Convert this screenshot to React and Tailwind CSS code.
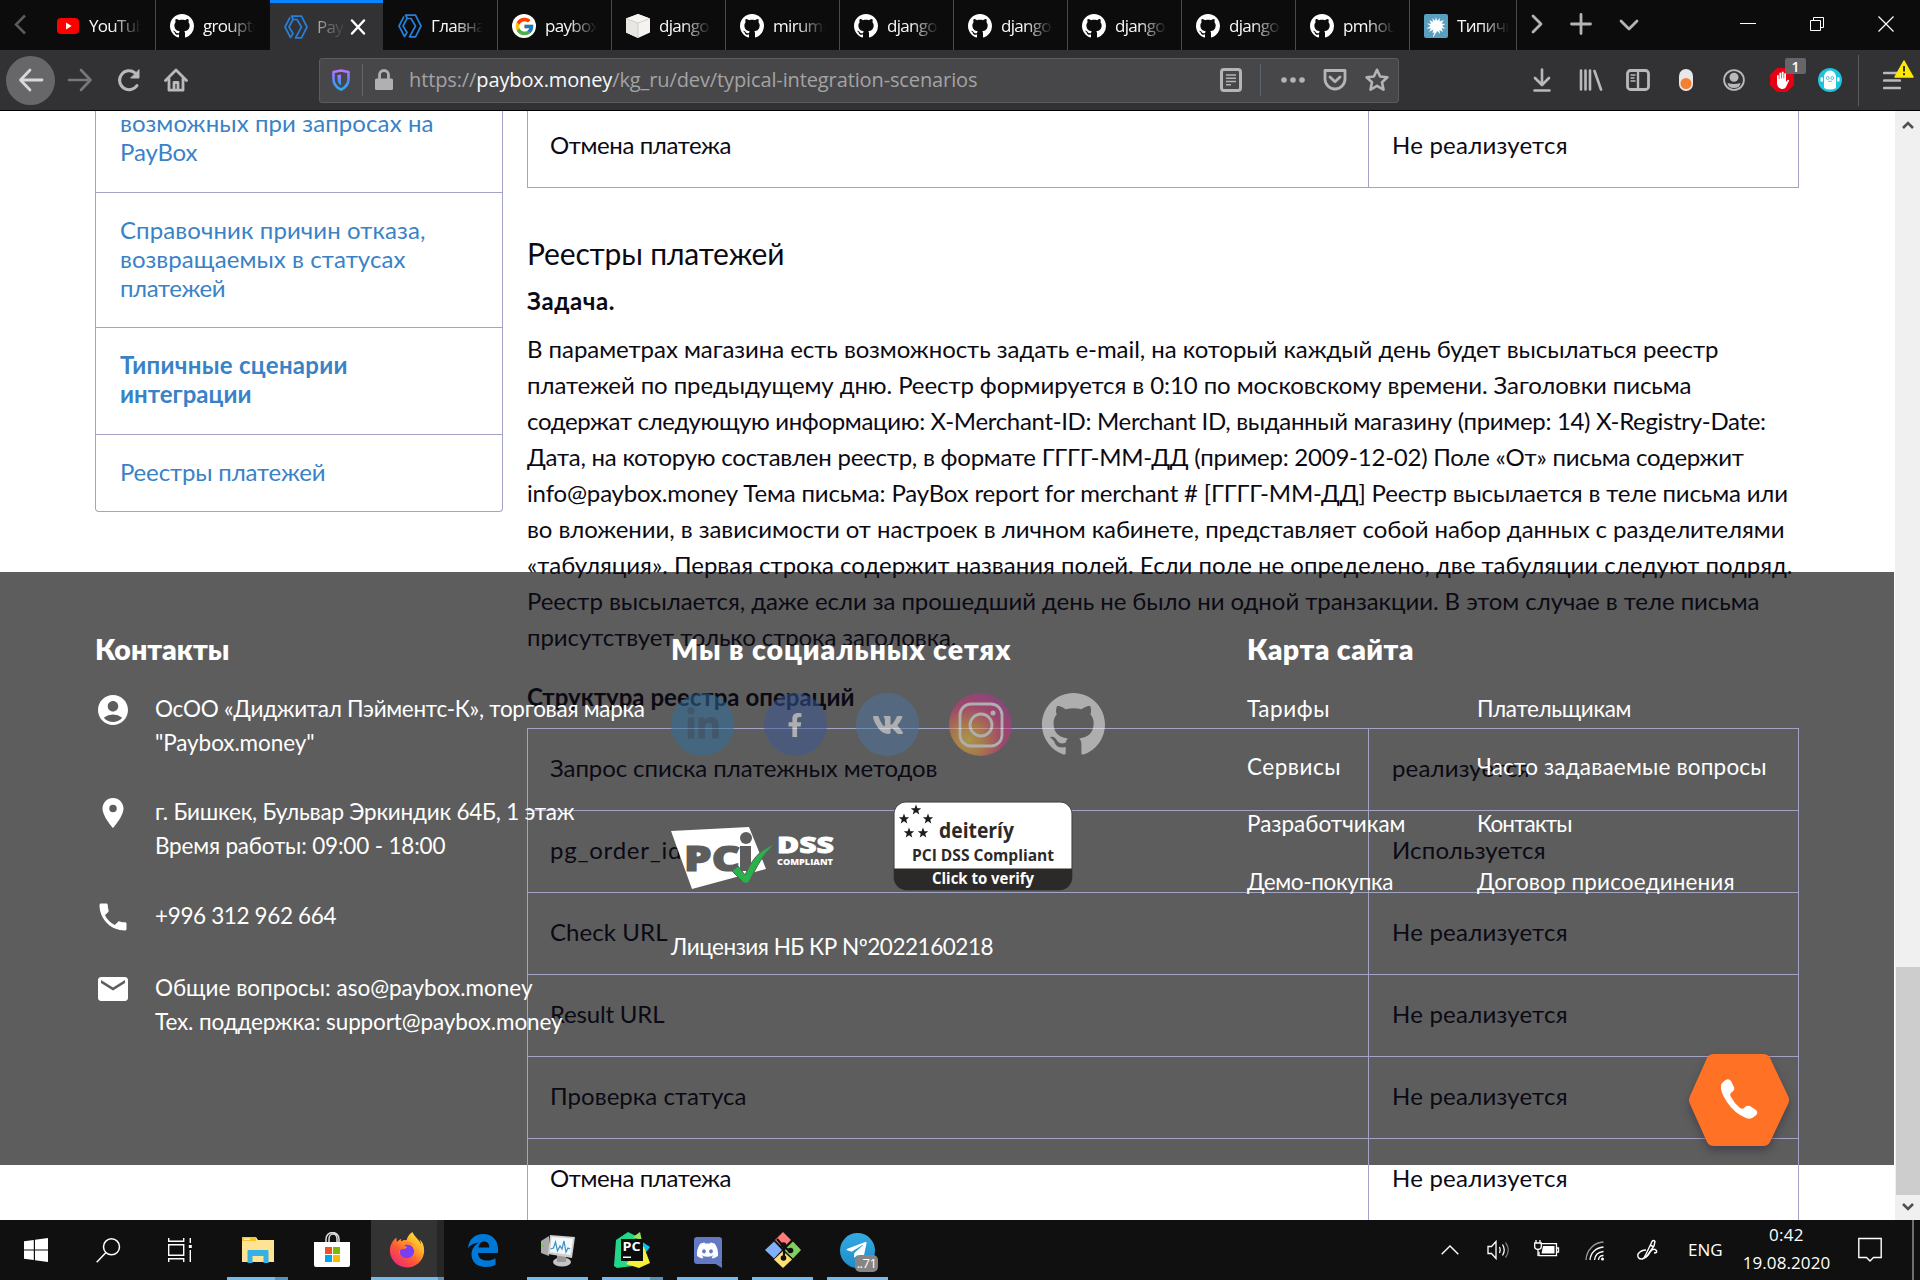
import React, { useLayoutEffect, useRef, useState } from "react";
import { FaFirefoxBrowser, FaDiscord, FaVk, FaLinkedinIn, FaFacebookF, FaTelegramPlane } from "react-icons/fa";
import { FcGoogle } from "react-icons/fc";
import { MdAccountCircle, MdPlace, MdPhone, MdEmail } from "react-icons/md";

/* A single line of text tracked out (or in) so that it fills a given width. */
function Fit({ w, className = "", children }) {
  const ref = useRef(null);
  const [sp, setSp] = useState(0);
  useLayoutEffect(() => {
    const natural = ref.current.getBoundingClientRect().width;
    setSp((w + 0.5 - natural) / (ref.current.textContent.length - 1));
  }, [w]);
  return (
    <span ref={ref} className={`inline-block whitespace-pre ${className}`} style={{ letterSpacing: `${sp}px` }}>
      {children}
    </span>
  );
}

const GithubMark = ({ className }) => (
  <svg viewBox="0 0 16 16" className={className} fill="currentColor">
    <path d="M8 0C3.58 0 0 3.58 0 8c0 3.54 2.29 6.53 5.47 7.59.4.07.55-.17.55-.38 0-.19-.01-.82-.01-1.49-2.01.37-2.53-.49-2.69-.94-.09-.23-.48-.94-.82-1.13-.28-.15-.68-.52-.01-.53.63-.01 1.08.58 1.23.82.72 1.21 1.87.87 2.33.66.07-.52.28-.87.51-1.07-1.78-.2-3.64-.89-3.64-3.95 0-.87.31-1.59.82-2.15-.08-.2-.36-1.02.08-2.12 0 0 .67-.21 2.2.82.64-.18 1.32-.27 2-.27.68 0 1.36.09 2 .27 1.53-1.04 2.2-.82 2.2-.82.44 1.1.16 1.92.08 2.12.51.56.82 1.27.82 2.15 0 3.07-1.87 3.75-3.65 3.95.29.25.54.73.54 1.48 0 1.07-.01 1.93-.01 2.2 0 .21.15.46.55.38A8.013 8.013 0 0016 8c0-4.42-3.58-8-8-8z" />
  </svg>
);
const YoutubeMark = () => (
  <svg viewBox="0 0 24 24" className="size-6">
    <rect x="1" y="4" width="22" height="16" rx="4" fill="#f00" />
    <path d="M10 8.600v6.800l5.600-3.400z" fill="#fff" />
  </svg>
);
const PayboxMark = () => (
  <svg viewBox="0 0 24 24" className="size-6" fill="none" stroke="#2680d9" strokeWidth="1.700" strokeLinejoin="round">
    <path d="M6 2.500 1 12l5.500 10.500L9 18.500 5 12l4-7.500" />
    <path d="M7.500 1.200h10L23 12l-5.500 10.800h-6L17.500 12 13 4.500H9.500z" />
  </svg>
);
const BoxMark = () => (
  <svg viewBox="0 0 24 24" className="size-6">
    <path d="M12 0 24 4.500v14L12 24 0 18.500v-14z" fill="#f4f3f0" />
    <path d="M12 0 24 4.500 12 9 0 4.500z" fill="#f7f6f4" />
    <path d="M12 9v15L0 18.500v-14z" fill="#e9e7e3" />
    <path d="M0 4.500 12 9l12-4.500M12 9v15" stroke="#c9c6c0" strokeWidth=".8" fill="none" />
  </svg>
);
const SplatMark = () => (
  <svg viewBox="0 0 24 24" className="size-6">
    <rect width="24" height="24" rx="2" fill="#5b9fc0" />
    <path d="M12 3l1 4 3-3-.5 3.500L20 6l-2.500 3.500 4 .5-3.500 2 3.500 2.500-4-.2L19 18l-3.500-2 .5 4-2.500-3-2 2.500-2 3.500-.5-1 1.500-3.500-2 .5.800-3.500L5 18l2-3.500-4.500 0 4-2.500L3 9.500l4 .3L5.500 6 9 8l-.5-4L11 7z" fill="#fff" />
    <circle cx="12.500" cy="11.500" r="5" fill="#fff" />
  </svg>
);

const TABS = [
  ["yt", "YouTube", 114], ["gh", "groupte", 114], ["pb", "PayBox", 114], ["pb", "Главная", 114], ["gg", "paybox.m", 114],
  ["bx", "django-p", 114], ["gh", "mirumee", 114], ["gh", "django-o", 114], ["gh", "django-o", 114], ["gh", "django-o", 114],
  ["gh", "django-o", 114], ["gh", "pmhouse", 114], ["sp", "Типичны", 107],
];
const tabIcon = {
  yt: <YoutubeMark />, gh: <GithubMark className="size-6 text-white" />, pb: <PayboxMark />,
  gg: <span className="flex size-6 items-center justify-center rounded-full bg-white"><FcGoogle className="size-[21px]" /></span>,
  bx: <BoxMark />, sp: <SplatMark />,
};

function TabBar() {
  return (
    <div className="flex h-[50px] bg-[#0c0c0d] font-['Open_Sans',sans-serif] text-[#f9f9fa]">
      <div className="flex w-[42px] items-center pl-[13px]">
        <svg viewBox="0 0 14 22" className="h-[22px] w-[14px]" fill="none" stroke="#5a5a5c" strokeWidth="2.500"><path d="M12 1.500 3 10.500l9 9" /></svg>
      </div>
      {TABS.map(([ic, t, w], i) => (
        <div key={i} className={`flex h-[50px] items-center pt-[2px] pl-[14px] ${w === 107 ? "w-[107px]" : i === 2 ? "mr-px w-[113px]" : "w-[114px]"} ${i === 2 ? "border-t-[3px] border-[#0a84ff] bg-[#323234] pt-0 pb-[1px]" : i === 1 ? "" : "border-r border-[#4a4a4c]"}`}>
          <span className="shrink-0">{tabIcon[ic]}</span>
          <span className={`ml-[9px] overflow-hidden text-[17px] leading-6 tracking-[-0.7px] whitespace-nowrap ${i === 2 ? "w-[26px] bg-gradient-to-r from-[#b0b0b2] to-[#404042] bg-clip-text text-transparent" : "w-[52px] [mask-image:linear-gradient(to_right,#000_45%,transparent)]"}`}>{t}</span>
          {i === 2 && <svg viewBox="0 0 16 16" className="ml-[7px] size-4 shrink-0" stroke="#fff" strokeWidth="2.400" strokeLinecap="round"><path d="M2 1.500 14 14.500M14 1.500 2 14.500" /></svg>}
        </div>
      ))}
      <svg viewBox="0 0 12 24" className="mt-[12px] ml-[14px] h-6 w-3" fill="none" stroke="#b4b4b6" strokeWidth="2.800" strokeLinecap="round" strokeLinejoin="round"><path d="M2 4l8 8-8 8" /></svg>
      <svg viewBox="0 0 22 22" className="mt-[13px] ml-[27px] size-[22px]" stroke="#b4b4b6" strokeWidth="2.800" strokeLinecap="round"><path d="M11 1.500v19M1.500 11h19" /></svg>
      <svg viewBox="0 0 20 12" className="mt-[19px] ml-[27px] h-3 w-5" fill="none" stroke="#b4b4b6" strokeWidth="2.800" strokeLinecap="round" strokeLinejoin="round"><path d="M2 2l8 8 8-8" /></svg>
      <span className="mt-[23px] ml-[101px] h-px w-4 bg-white" />
      <svg viewBox="0 0 16 16" className="mt-[16px] ml-[53px] size-4" fill="none" stroke="#fff"><path d="M1.500 4.500h10v10h-10zM4.500 4.500v-3h10v10h-3" /></svg>
      <svg viewBox="0 0 16 16" className="mt-[16px] ml-[53px] size-4" stroke="#fff" strokeWidth="1.200"><path d="M.5.500l15 15M15.500.500l-15 15" /></svg>
    </div>
  );
}

const G = "#b9b9bb";
function Toolbar() {
  return (
    <div className="flex h-[61px] items-center border-b border-black bg-[#323234]">
      <div className="ml-[6px] flex size-[49px] items-center justify-center rounded-full bg-[#676769]">
        <svg viewBox="0 0 26 24" className="h-6 w-[26px]" fill="none" stroke="#d8d8d9" strokeWidth="2.800" strokeLinecap="round" strokeLinejoin="round"><path d="M12 2 2.500 12 12 22M3 12h21" /></svg>
      </div>
      <svg viewBox="0 0 26 24" className="ml-[12px] h-6 w-[26px]" fill="none" stroke="#77777a" strokeWidth="2.600" strokeLinecap="round" strokeLinejoin="round"><path d="M14 2l9.500 10L14 22M23 12H2" /></svg>
      <svg viewBox="0 0 24 24" className="ml-[24px] size-6" fill="none" stroke={G} strokeWidth="3" strokeLinecap="round"><path d="M20 17.500A9.500 9.500 0 1 1 18 4.800" /><path d="M22 2v8h-8z" fill={G} stroke={G} strokeWidth="1" strokeLinejoin="round" /></svg>
      <svg viewBox="0 0 24 24" className="ml-[23px] size-6" fill="none" stroke={G} strokeWidth="2.800" strokeLinecap="round" strokeLinejoin="round"><path d="M1.500 12.500 12 2l10.500 10.500M5 11v11.200h14V11" /><path d="M10 21v-6.500h4V21" /></svg>

      <div className="ml-[131px] flex h-[45px] w-[1080px] items-center rounded-[3px] border border-[#5b5b5d] bg-[#474749]">
        <svg viewBox="0 0 18 22" className="ml-[12px] h-[22px] w-[18px]" fill="none">
          <defs><linearGradient id="sh" x2="0" y2="1"><stop stopColor="#b675ff" /><stop offset=".5" stopColor="#5f86ff" /><stop offset="1" stopColor="#2aaaf0" /></linearGradient></defs>
          <path d="M9 1.500 16.500 3v7c0 5-3 8.500-7.500 10.500C4.500 18.500 1.500 15 1.500 10V3z" stroke="url(#sh)" strokeWidth="2.600" strokeLinejoin="round" />
          <path d="M9 5.500v11C6.500 14.800 5.400 12.500 5.400 9.500V6.200z" fill="url(#sh)" />
        </svg>
        <span className="ml-[12px] h-[32px] w-px bg-[#66666a]" />
        <svg viewBox="0 0 18 22" className="ml-[12px] h-[22px] w-[18px]"><rect y="9.500" width="18" height="11.500" rx="1.500" fill="#b0b0b2" /><path d="M4.500 10V6a4.500 4.500 0 0 1 9 0v4" fill="none" stroke="#b0b0b2" strokeWidth="2.800" /></svg>
        <span className="ml-[16px] w-[570px] font-['Open_Sans',sans-serif] text-[20px] text-[#a3a3a5]">
          <Fit w={568}>https://<span className="text-[#f9f9fa]">paybox.money</span>/kg_ru/dev/typical-integration-scenarios</Fit>
        </span>
        <svg viewBox="0 0 22 24" className="ml-[241px] h-6 w-[22px]" fill="none" stroke="#b4b4b6"><rect x="1.500" y="1.500" width="19" height="21" rx="2.500" strokeWidth="3" /><path d="M6 7h10M6 10.300h10M6 13.600h10M6 16.800h5" strokeWidth="1.500" /></svg>
        <span className="ml-[18px] h-[32px] w-px bg-[#5f6672]" />
        <svg viewBox="0 0 24 6" className="ml-[20px] h-[6px] w-6" fill="#b4b4b6"><circle cx="3" cy="3" r="2.800" /><circle cx="12" cy="3" r="2.800" /><circle cx="21" cy="3" r="2.800" /></svg>
        <svg viewBox="0 0 24 22" className="ml-[18px] h-[22px] w-6" fill="none" stroke="#b4b4b6" strokeWidth="2.800" strokeLinecap="round" strokeLinejoin="round"><path d="M2 1.500h20v8.500a10 10 0 0 1-20 0z" /><path d="M7 8l5 4.800L17 8" /></svg>
        <svg viewBox="0 0 24 24" className="ml-[18px] size-6" fill="none" stroke="#b4b4b6" strokeWidth="2.600" strokeLinejoin="round"><path d="M12 1.800l3.100 6.700 7.300.8-5.400 5 1.500 7.300L12 17.900l-6.500 3.700L7 14.300l-5.400-5 7.300-.8z" /></svg>
      </div>

      <svg viewBox="0 0 18 24" className="ml-[134px] h-6 w-[18px]" fill="none" stroke={G} strokeWidth="2.600" strokeLinecap="round" strokeLinejoin="round"><path d="M9 1.500v15M2 10l7 7 7-7M1.500 22.500h15" /></svg>
      <svg viewBox="0 0 24 22" className="ml-[28px] h-[22px] w-6" fill="none" stroke={G} strokeWidth="2.600" strokeLinecap="round"><path d="M2 1.500v19M6.500 1.500v19M11 1.500v19M15.500 2l6.500 18.500" /></svg>
      <svg viewBox="0 0 24 22" className="ml-[23px] h-[22px] w-6" fill="none" stroke={G}><rect x="1.500" y="1.500" width="21" height="19" rx="3" strokeWidth="2.800" /><path d="M12 2v18" strokeWidth="2.400" /><path d="M4.500 6h5M4.500 9h4M4.500 12h5" strokeWidth="1.400" /></svg>
      <svg viewBox="0 0 14 22" className="ml-[29px] h-[22px] w-[14px]"><rect width="14" height="22" rx="7" fill="#e8e8ea" /><circle cx="7" cy="14.500" r="5.500" fill="#f58030" /></svg>
      <svg viewBox="0 0 22 22" className="ml-[30px] size-[22px]" fill="none" stroke={G}><circle cx="11" cy="11" r="9.900" strokeWidth="1.800" /><circle cx="11" cy="8.300" r="4.500" fill={G} stroke="none" /><path d="M4.500 14q6.500 2 13 0-.5 5-6.500 5t-6.500-5z" fill={G} stroke="none" /></svg>
      <div className="relative ml-[25px]">
        <svg viewBox="0 0 24 24" className="size-6"><path d="M7 0h10l7 7v10l-7 7H7l-7-7V7z" fill="#e60012" /><path d="M7 13V7.500q1-1 1.800 0V11h.6V5q1-1 1.800 0v5.500h.6V4q1-1 1.800 0v6.500h.6V5.500q1-1 1.800 0V14l1.500-2q1.500-.5 1.600.5L16 19q-1 2-3.500 2h-1Q7.500 20 7 16z" fill="#fff" /></svg>
        <span className="absolute -top-[10px] left-[15px] flex h-4 w-[21px] items-center justify-center rounded-[2px] bg-[#66666a] font-['Open_Sans',sans-serif] text-[14px] font-semibold text-white">1</span>
      </div>
      <svg viewBox="0 0 24 24" className="ml-[24px] size-6"><circle cx="12" cy="12" r="12" fill="#1cc5dc" /><path d="M6 20V9a6 6.500 0 0 1 12 0v11q-6 3-12 0z" fill="#fff" /><path d="M2.500 9.500h2.500v4H2.500zM19 9.500h2.500v4H19z" fill="#fff" /><circle cx="9.700" cy="10" r="1.500" fill="none" stroke="#2ab5c8" strokeWidth=".8" /><circle cx="14.300" cy="10" r="1.500" fill="none" stroke="#2ab5c8" strokeWidth=".8" /><path d="M10 13q2 1 4 0" stroke="#2ab5c8" strokeWidth=".8" fill="none" /></svg>
      <span className="ml-[16px] h-[51px] w-px bg-[#5a5a5c]" />
      <div className="relative ml-[24px]">
        <svg viewBox="0 0 18 18" className="h-[19px] w-[18px]" stroke={G} strokeWidth="2.700" strokeLinecap="round"><path d="M1.200 1.500h15.600M1.200 9h15.600M1.200 16.500h15.600" /></svg>
        <svg viewBox="0 0 20 18" className="absolute -top-[11px] left-[11px] h-[18px] w-5"><path d="M10 1l9 16H1z" fill="#ffe900" stroke="#ffe900" strokeWidth="1.500" strokeLinejoin="round" /><path d="M10 6v5.500M10 13v2.200" stroke="#3a3a20" strokeWidth="2" /></svg>
      </div>
    </div>
  );
}

function Sidebar() {
  const item = "flow-root border-b border-[#a3a3c5] px-6 leading-[28.8px]";
  return (
    <nav className="h-[401px] w-[408px] rounded-b-[4px] border-x border-b border-[#a3a3c5] text-[24px] text-[#3a82c6]">
      <div className={`${item} h-[82px]`}><div className="-mt-[2px]"><Fit w={313}>возможных при запросах на</Fit><br /><Fit w={77}>PayBox</Fit></div></div>
      <div className={`${item} h-[135px] pt-[23px]`}><Fit w={305}>Справочник причин отказа,</Fit><br /><Fit w={285}>возвращаемых в статусах</Fit><br /><Fit w={105}>платежей</Fit></div>
      <div className={`${item} h-[107px] pt-[23px] font-bold`}><Fit w={227}>Типичные сценарии</Fit><br /><Fit w={131}>интеграции</Fit></div>
      <div className="px-6 pt-[23px] leading-[28.8px]"><Fit w={205}>Реестры платежей</Fit></div>
    </nav>
  );
}

function Row({ a, aw, b, bw }) {
  return (
    <div className="flex h-[82px] border-b border-[#a3a3c5]">
      <div className="flex w-[841px] items-center border-r border-[#a3a3c5] pb-[3px] pl-[22px]"><Fit w={aw}>{a}</Fit></div>
      <div className="flex items-center pb-[3px] pl-[23px]"><Fit w={bw}>{b}</Fit></div>
    </div>
  );
}

const PARA = [
  ["В параметрах магазина есть возможность задать e-mail, на который каждый день будет высылаться реестр", 1191],
  ["платежей по предыдущему дню. Реестр формируется в 0:10 по московскому времени. Заголовки письма", 1164],
  ["содержат следующую информацию: X-Merchant-ID: Merchant ID, выданный магазину (пример: 14) X-Registry-Date:", 1238.5],
  ["Дата, на которую составлен реестр, в формате ГГГГ-ММ-ДД (пример: 2009-12-02) Поле «От» письма содержит", 1216.5],
  ["info@paybox.money Тема письма: PayBox report for merchant # [ГГГГ-ММ-ДД] Реестр высылается в теле письма или", 1260.5],
  ["во вложении, в зависимости от настроек в личном кабинете, представляет собой набор данных с разделителями", 1257],
  ["«табуляция». Первая строка содержит названия полей. Если поле не определено, две табуляции следуют подряд.", 1265],
  ["Реестр высылается, даже если за прошедший день не было ни одной транзакции. В этом случае в теле письма", 1232],
  ["присутствует только строка заголовка.", 429],
];

function Article() {
  return (
    <article className="ml-6 w-[1272px] text-[24px] leading-9 text-[#0b0a14]">
      <div className="flow-root h-[77px] border-x border-[#a3a3c5]">
        <div className="-mt-[5px]"><Row a="Отмена платежа" aw={181} b="Не реализуется" bw={175} /></div>
      </div>
      <h2 className="mt-[47px] text-[30px] leading-9"><Fit w={257}>Реестры платежей</Fit></h2>
      <p className="mt-3 font-bold"><Fit w={87}>Задача.</Fit></p>
      <p className="mt-3">{PARA.map(([t, w]) => <Fit key={t} w={w} className="block! w-max">{t}</Fit>)}</p>
      <p className="mt-6 font-bold"><Fit w={327}>Структура реестра операций</Fit></p>
      <div className="mt-[13px] border-x border-t border-[#a3a3c5]">
        <Row a="Запрос списка платежных методов" aw={387} b="реализуется" bw={137} />
        <Row a="pg_order_id" aw={131} b="Используется" bw={153} />
        <Row a="Check URL" aw={117} b="Не реализуется" bw={175} />
        <Row a="Result URL" aw={114} b="Не реализуется" bw={175} />
        <Row a="Проверка статуса" aw={196} b="Не реализуется" bw={175} />
        <Row a="Отмена платежа" aw={181} b="Не реализуется" bw={175} />
      </div>
    </article>
  );
}

function Contact({ icon, lines, className }) {
  return (
    <div className={`flex ${className}`}>
      <div className="w-[60px] shrink-0">{icon}</div>
      <div>{lines.map(([t, w]) => <Fit key={t} w={w} className="block! w-max leading-[34px]">{t}</Fit>)}</div>
    </div>
  );
}

const LINKS = [
  ["Тарифы", 82, "Плательщикам", 154], ["Сервисы", 93, "Часто задаваемые вопросы", 289],
  ["Разработчикам", 158, "Контакты", 95], ["Демо-покупка", 146, "Договор присоединения", 257],
];

const Star = ({ x, y }) => <path transform={`translate(${x} ${y})`} d="M0-5.500 1.400-1.700 5.200-1.700 2.200.7 3.300 4.500 0 2.200-3.300 4.500-2.200.7-5.200-1.700-1.400-1.700z" fill="#1d1d1b" />;

function Footer() {
  const circle = "flex size-[63px] items-center justify-center rounded-full text-white opacity-50";
  const heading = "-mt-px text-[28.500px] leading-9 font-extrabold";
  return (
    <footer className="absolute top-[461px] left-0 flex h-[593px] w-[1894px] pl-[95px] pt-[60px] text-[22.5px] text-white">
      <section className="w-[576px] shrink-0">
        <h3 className={heading}><Fit w={134}>Контакты</Fit></h3>
        <Contact className="mt-[25px]" icon={<MdAccountCircle className="size-9" />} lines={[["ОсОО «Диджитал Пэйментс-К», торговая марка", 489.5], ['"Paybox.money"', 159]]} />
        <Contact className="mt-[35px]" icon={<MdPlace className="size-9" />} lines={[["г. Бишкек, Бульвар Эркиндик 64Б, 1 этаж", 419], ["Время работы: 09:00 - 18:00", 290]]} />
        <Contact className="mt-[36px]" icon={<MdPhone className="size-9" />} lines={[["+996 312 962 664", 181]]} />
        <Contact className="mt-[36px]" icon={<MdEmail className="size-9" />} lines={[["Общие вопросы: aso@paybox.money", 377], ["Тех. поддержка: support@paybox.money", 407]]} />
      </section>
      <section className="w-[576px] shrink-0">
        <h3 className={heading}><Fit w={339}>Мы в социальных сетях</Fit></h3>
        <div className="mt-[26px] flex gap-[29.700px]">
          <span className={`${circle} bg-[#2d6f9f]`}><FaLinkedinIn className="size-9 text-[#2b5378]" /></span>
          <span className={`${circle} bg-[#3b5998]`}><FaFacebookF className="size-6" /></span>
          <span className={`${circle} bg-[#4d76a1]`}><FaVk className="size-8" /></span>
          <span className={`${circle} bg-[radial-gradient(circle_at_30%_75%,#f5d03a_0%,#f0923e_25%,#e22f7c_55%,#c8308c_70%,#7a3fb0_95%)]`}>
            <svg viewBox="0 0 46 46" className="size-[46px]" fill="none" stroke="#fff" strokeWidth="2.800"><rect x="2" y="2" width="42" height="42" rx="11" /><circle cx="23" cy="23" r="11" /><circle cx="35" cy="11" r="2.500" fill="#fff" stroke="none" /></svg>
          </span>
          <span className={circle}><GithubMark className="size-[63px]" /></span>
        </div>
        <div className="mt-[45px] flex">
          <svg viewBox="0 0 163 64" className="mt-[26px] h-16 w-[163px]">
            <path d="M0 4 78 0l17 42-74 20z" fill="#fff" />
            <g fontFamily="Open Sans, sans-serif" fontWeight="800">
              <text x="13" y="44" fontSize="35" textLength="56" lengthAdjust="spacingAndGlyphs" fill="#5d5d5d" stroke="#5d5d5d" strokeWidth="1.200">PC</text>
              <text x="106" y="26" fontSize="23" textLength="57" lengthAdjust="spacingAndGlyphs" fill="#fff" stroke="#fff" strokeWidth=".8">DSS</text>
              <text x="106" y="38" fontSize="9" textLength="56" lengthAdjust="spacingAndGlyphs" fill="#fff">COMPLIANT</text>
            </g>
            <circle cx="75" cy="11" r="6" fill="#5d5d5d" /><path d="M69 19h11v25H69z" fill="#5d5d5d" />
            <path d="M61 44l6-5 7 9c6-13 13-25 30-31-12 10-18 22-26 38q-4 3-7-1z" fill="#27b24a" stroke="#5d5d5d" strokeWidth="1" />
          </svg>
          <svg viewBox="0 0 180 90" className="ml-[59px] h-[90px] w-[180px]">
            <rect x=".7" y=".7" width="178.600" height="88.600" rx="13" fill="#2b2a29" />
            <path d="M1.500 67.500V13A11.500 11.500 0 0 1 13 1.500h153.500A11.500 11.500 0 0 1 178.500 13v54.500z" fill="#fff" />
            <Star x={23} y={9} /><Star x={11} y={18} /><Star x={35} y={18} /><Star x={16} y={32} /><Star x={30} y={32} />
            <g fontFamily="Open Sans, sans-serif" fontWeight="700">
              <text x="46" y="37" fontSize="21" textLength="75" lengthAdjust="spacingAndGlyphs" fill="#2b2a29">deiteríy</text>
              <text x="19" y="60" fontSize="16" textLength="142" lengthAdjust="spacingAndGlyphs" fill="#2b2a29">PCI DSS Compliant</text>
              <text x="39" y="83" fontSize="16" textLength="102" lengthAdjust="spacingAndGlyphs" fill="#fff">Click to verify</text>
            </g>
          </svg>
        </div>
        <p className="mt-[39px] leading-[34px]"><Fit w={322}>Лицензия НБ КР Nº2022160218</Fit></p>
      </section>
      <section>
        <h3 className={heading}><Fit w={166}>Карта сайта</Fit></h3>
        <div className="mt-[25px] grid grid-cols-[230px_300px] gap-y-[23.6px]">
          {LINKS.map(([a, aw, b, bw]) => (
            <React.Fragment key={a}><Fit w={aw} className="w-max leading-[34px]">{a}</Fit><Fit w={bw} className="w-max leading-[34px]">{b}</Fit></React.Fragment>
          ))}
        </div>
      </section>
    </footer>
  );
}

function Page() {
  return (
    <div className="flex h-[1109px] bg-white">
      <main className="relative h-[1109px] w-[1895px] overflow-hidden bg-[linear-gradient(#5d5d5d,#5d5d5d)] bg-[length:1894px_593px] bg-[position:0_461px] bg-no-repeat font-[Lato,sans-serif]">
        <div className="flex pl-[95px]"><Sidebar /><Article /></div>
        <Footer />
        <svg viewBox="0 0 116 116" className="absolute top-[935px] left-[1681px] size-[116px] drop-shadow-[0_5px_4px_rgba(40,35,60,0.45)]">
          <path d="M33 8h49q5 0 7 4l18 38q2 4 0 8L89 96q-2 4-7 4H33q-5 0-7-4L9 58q-2-4 0-8l17-38q2-4 7-4z" fill="#ff7226" />
          <path d="M42 36q5-5 8-1l3 6q1 3-2 5-3 2-1 5 3 6 9 11 3 2 5-1 2-2 5-1l6 4q3 3-1 6-4 4-9 2-12-5-19-16-7-10-6-17 1-2 2-3z" fill="#fff" />
        </svg>
      </main>
      <aside className="flex w-[25px] flex-col items-center bg-[#f0f0f0]">
        <svg viewBox="0 0 12 8" className="mt-[10px] h-2 w-3" fill="none" stroke="#505050" strokeWidth="2.600"><path d="M1 7l5-5 5 5" /></svg>
        <div className="mt-[838px] h-[228px] w-[24px] bg-[#cdcdcd]" />
        <svg viewBox="0 0 12 8" className="mt-[8px] h-2 w-3" fill="none" stroke="#505050" strokeWidth="2.600"><path d="M1 1l5 5 5-5" /></svg>
      </aside>
    </div>
  );
}

const Explorer = () => (
  <svg viewBox="0 0 34 36" className="h-9 w-[34px]"><path d="M1 5h14l2 3h16v22H1z" fill="#ffe394" /><path d="M1 5h14v4H1z" fill="#f7c52b" /><path d="M3 6.500h6v1.200H3z" fill="#fff" /><path d="M6.500 31V19q0-1 1-1h19q1 0 1 1v12h-5v-7h-11v7z" fill="#36b1e6" /></svg>
);
const Store = () => (
  <svg viewBox="0 0 36 36" className="size-9"><path d="M12 11V7a6 6 0 0 1 13 0v4M15 11V7a4 5 0 0 1 8 0v4" fill="none" stroke="#ddd" strokeWidth="1.500" /><path d="M0 10h36v23q0 2-2 2H2q-2 0-2-2z" fill="#fff" /><path d="M11 15h7v7h-7z" fill="#f25022" /><path d="M19 15h7v7h-7z" fill="#7fba00" /><path d="M11 23h7v7h-7z" fill="#00a4ef" /><path d="M19 23h7v7h-7z" fill="#ffb900" /></svg>
);
const Firefox = () => (
  <span className="flex">
    <svg width="0" height="0"><defs><linearGradient id="ff" x1="1" x2="0.200" y1="0" y2="1"><stop stopColor="#fff14a" /><stop offset=".35" stopColor="#ffb32c" /><stop offset=".65" stopColor="#ff5a33" /><stop offset="1" stopColor="#f0247c" /></linearGradient></defs></svg>
    <span className="flex size-9 items-center justify-center bg-[radial-gradient(circle_at_50%_55%,#7a3ff0_0_26%,#ff8a2c_28%_44%,transparent_46%)]"><FaFirefoxBrowser className="size-9" fill="url(#ff)" /></span>
  </span>
);
const Edge = () => (
  <svg viewBox="0 0 32 34" className="h-[34px] w-8"><path d="M1 15C2 6 8 1 16 1c9 0 15 6 15 15v4H11c0 5 4 7.500 9 7.500 3 0 6-.8 8.500-2.300v6.500C26 33 22.500 34 18.500 34 10 34 4.500 29 4.500 21.500c0-5.500 3-9.500 7.500-12C7 10 3.500 12 1 15zm10.500-.5h10.800c0-4-2-6-5.300-6-3 0-5 2.300-5.500 6z" fill="#0078d7" /></svg>
);
const Monitor = () => (
  <svg viewBox="0 0 36 34" className="h-[36px] w-9"><path d="M1 8l8-5v20l-8-3z" fill="#aaa" /><path d="M2 12h2v2H2z" fill="#5d2" /><ellipse cx="22" cy="29" rx="9" ry="4.500" fill="#c4c4c4" /><path d="M17 20h9v9h-9z" fill="#999" /><path d="M10 2l25 2-3 21-24-4z" fill="#cfcfcf" /><path d="M11.500 4l21.500 1.600L30.500 22 10 19z" fill="#f2f8fc" /><path d="M10.500 16l3-1 2-6 2 9 2.500-5 2 3 2-8 2 11 2-4 2 1" fill="none" stroke="#3d8fc4" strokeWidth="1.200" /></svg>
);
const PyCharm = () => (
  <svg viewBox="0 0 36 36" className="size-9"><path d="M2 8 14 0l8 4-3 30-16 2-3-2z" fill="#21d789" /><path d="M19 5l7-5 2 9z" fill="#9be35a" /><path d="M27 9l9 6-7 9z" fill="#07c3f2" /><path d="M30 15l6 16-11 5-13-4 16-18z" fill="#f5f03a" /><path d="M7 7h22v22H7z" fill="#0b0b0b" /><text x="8.500" y="18.500" fontSize="12" fontFamily="Open Sans, sans-serif" fontWeight="700" fill="#fff" textLength="18" lengthAdjust="spacingAndGlyphs">PC</text><path d="M9 24.500h8v1.500H9z" fill="#fff" /></svg>
);
const Discord = () => (
  <span className="relative flex h-[27px] w-[28px] items-center justify-center rounded-[3px] bg-[#6479c4]">
    <FaDiscord className="size-[23px] text-white" />
    <svg viewBox="0 0 8 5" className="absolute right-0 -bottom-[4px] h-[5px] w-2"><path d="M0 0h8v5z" fill="#6479c4" /></svg>
  </span>
);
const Git = () => (
  <svg viewBox="0 0 36 36" className="size-9"><path d="M18 0l8 8-8 8-8-8z" fill="#ff7b79" /><path d="M9 9.500l8 8.500-8 8.500L0 18z" fill="#7fb0f8" /><path d="M28 9.500l8 8.500-8 8.500-9-8.500z" fill="#7fd05c" /><path d="M18 19l9 8.500-9 8.500-9-8.500z" fill="#ffdf76" /><path d="M12 7l7 8v12M19 15l6 4" stroke="#111" strokeWidth="2.200" fill="none" /><circle cx="18.500" cy="13" r="2.800" fill="#111" /><circle cx="18.500" cy="26" r="2.800" fill="#111" /><circle cx="25.500" cy="18.500" r="2.800" fill="#111" /></svg>
);
const Telegram = () => (
  <span className="relative flex size-[35px] items-center justify-center rounded-full bg-gradient-to-b from-[#35aae2] to-[#1c8dc8]">
    <FaTelegramPlane className="mr-[3px] size-[23px] text-white" />
    <span className="absolute top-[22px] left-[15px] flex h-[17px] w-[23px] items-center justify-center rounded-[5px] bg-[#858585] font-['Open_Sans',sans-serif] text-[13px] leading-4 tracking-[-0.5px] text-white">..71</span>
  </span>
);

const APPS = [
  { el: <Explorer />, stack: true, w: "w-[61px]", ml: "ml-[23px]" },
  { el: <Store />, idle: true, w: "w-[61px]", ml: "ml-[13px]" },
  { el: <Firefox />, stack: true, w: "w-[73px]", ml: "ml-[9px]", active: true },
  { el: <Edge />, idle: true, w: "w-[61px]", ml: "ml-[8px]" },
  { el: <Monitor />, w: "w-[61px]", ml: "ml-[14px]" },
  { el: <PyCharm />, stack: true, w: "w-[61px]", ml: "ml-[14px]" },
  { el: <Discord />, w: "w-[61px]", ml: "ml-[14px]" },
  { el: <Git />, w: "w-[61px]", ml: "ml-[14px]" },
  { el: <Telegram />, w: "w-[61px]", ml: "ml-[14px]" },
];

function Taskbar() {
  return (
    <div className="flex h-[60px] bg-[#101010] font-['Open_Sans',sans-serif] text-white">
      <svg viewBox="0 0 24 24" className="mt-[18px] ml-[24px] size-6" fill="#fff"><path d="M0 3.300 9.800 2v9.400H0zM11 1.800 24 0v11.400H11zM0 12.600h9.800V22L0 20.700zM11 12.600h13V24l-13-1.800z" /></svg>
      <svg viewBox="0 0 25 25" className="mt-[18px] ml-[48px] size-[25px]" fill="none" stroke="#fff" strokeWidth="1.500"><circle cx="15.500" cy="8.800" r="8" /><path d="M10 14.500.700 24.300" /></svg>
      <svg viewBox="0 0 24 24" className="mt-[18px] ml-[47px] size-6" fill="none" stroke="#fff" strokeWidth="1.400"><path d="M.7 0v3.300h15V0M.7 24v-3.300h15V24M.7 6.700h15v10.600H.7zM22.300 0v5M22.300 12v12" /><path d="M20.800 7h3v3h-3z" fill="#fff" stroke="none" /></svg>
      <div className="ml-[12px] flex">
        {APPS.map((a, i) => (
          <div key={i} className={`flex h-[60px] flex-col ${a.w} ${a.ml} ${a.active ? "bg-gradient-to-r from-[#333] from-90% to-[#262626] to-90%" : ""}`}>
            <div className={`flex h-[57px] items-center justify-center pt-[3px] ${a.active ? "pr-[2px]" : i === 5 ? "pr-[2px]" : ""}`}>{a.el}</div>
            {!a.idle && <div className="flex h-[3px]"><span className="grow bg-[#76b9ed]" />{a.stack && <span className={a.active ? "w-[6px] bg-[#5a8fb8]" : "w-[13px] bg-[#5a8fb8]"} />}</div>}
          </div>
        ))}
      </div>
      <svg viewBox="0 0 18 10" className="mt-[25px] ml-[553px] h-[10px] w-[18px]" fill="none" stroke="#fff" strokeWidth="1.400"><path d="M.7 9.300 9 1l8.300 8.300" /></svg>
      <svg viewBox="0 0 24 20" className="mt-[20px] ml-[28px] h-5 w-6" fill="none" stroke="#fff" strokeWidth="1.300"><path d="M1 6.500h3.500L9 1.500v17l-4.500-5H1z" /><path d="M12.500 7q1.500 3 0 6M15.500 4.500q3.500 5.500 0 11" /><path d="M18.500 2.500q5.500 7.500 0 15" stroke="#777" /></svg>
      <svg viewBox="0 0 26 18" className="mt-[20px] ml-[23px] h-[18px] w-[26px]" fill="none" stroke="#fff" strokeWidth="1.300"><path d="M6 3.700h16.500v12H5v-4M23 8h1.500v4H23" /><path d="M9 6h11.500v7.500H7.500z" fill="#fff" stroke="none" /><path d="M2 0v3M6 0v3M.7 3h6.600v4q0 2-3.300 2.500Q.7 9 .7 7zM4 9.500V16" fill="#101010" /></svg>
      <svg viewBox="0 0 20 20" className="mt-[21px] ml-[25px] size-5" fill="none" stroke="#fff" strokeWidth="1.300"><path d="M1 19C1.500 9 9 1.500 18.500 1" stroke="#999" /><path d="M5 19C5.500 12 11 6.500 18.500 6M9.500 19c.5-5 4-8 9-8.500M13.500 19c0-2.500 2-4.500 5-4.500" /><circle cx="17.500" cy="18" r="1.500" fill="#fff" stroke="none" /></svg>
      <svg viewBox="0 0 22 22" className="mt-[19px] ml-[32px] size-[22px]" fill="none" stroke="#fff" strokeWidth="1.400"><path d="M9 15 15 2.500q1.500-2 3 0L17 7 9.500 17.500 7 19zM13 6l4 2" /><path d="M9 11q-5 0-8 4-1 5 4 5 6-2 8-7 3-4 6-2 2 3-2 3" /></svg>
      <span className="mt-[16px] ml-[29px] w-[35px] text-[17px] leading-7"><Fit w={34}>ENG</Fit></span>
      <div className="ml-[19px] flex w-[89px] flex-col items-center text-[17px] leading-7 pt-[1px]"><Fit w={34}>0:42</Fit><Fit w={87}>19.08.2020</Fit></div>
      <svg viewBox="0 0 24 26" className="mt-[17px] ml-[27px] h-[26px] w-6" fill="none" stroke="#fff" strokeWidth="1.400"><path d="M.8 1.500h22.400v19H15.500L12 24l-3.500-3.500H.8z" /></svg>
      <span className="ml-[30px] w-[2px] bg-[#6e6e6e]" />
    </div>
  );
}

export default function App() {
  return (
    <div className="h-[1280px] w-[1920px] overflow-hidden bg-white">
      <TabBar />
      <Toolbar />
      <Page />
      <Taskbar />
    </div>
  );
}
